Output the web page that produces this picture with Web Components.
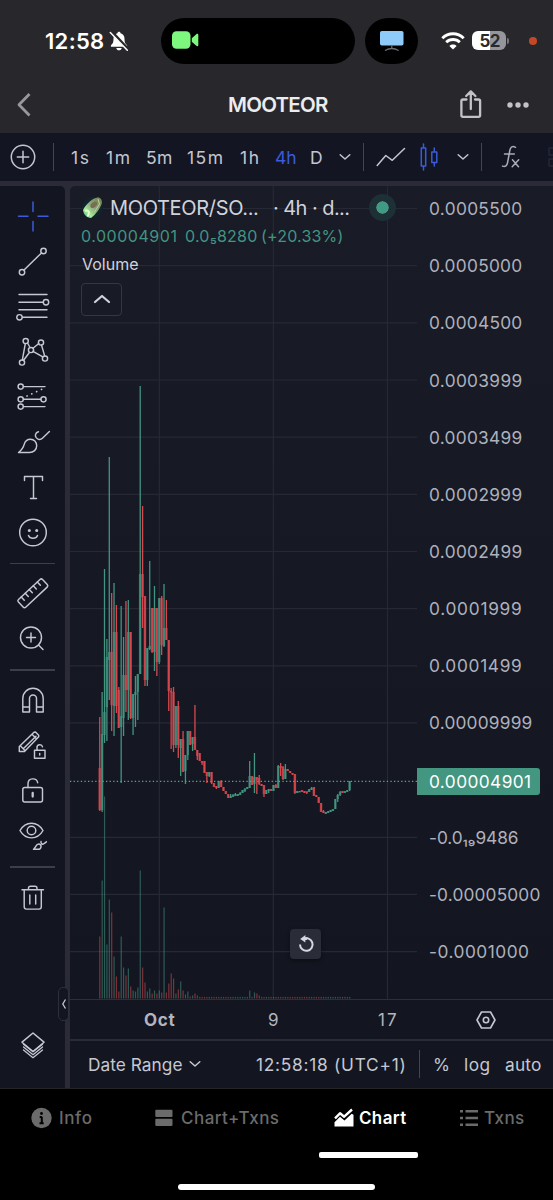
<!DOCTYPE html>
<html lang="en">
<head>
<meta charset="utf-8">
<title>MOOTEOR</title>
<style>
    body {
        margin: 0;
        width: 553px;
        height: 1200px;
        overflow: hidden;
        background: #000;
        font-family: Inter, "Liberation Sans", sans-serif;
    }
</style>
</head>
<body>
<mobile-app></mobile-app>

<script>
// every icon: [width, height, markup], stroke by default
const ICONS = {
    bell: [20, 20, `<path d="M10 .8c.9 0 1.500.6 1.500 1.400 2.600.7 4 2.800 4 5.500 0 4 1 5 2.300 6.300.8.900.4 1.800-.8 1.800H3c-1.200 0-1.600-.9-.8-1.800C3.500 12.700 4.500 11.700 4.500 7.700c0-2.700 1.400-4.800 4-5.500C8.500 1.400 9.100.8 10 .8zM7.300 17h5.400c-.3 1.600-1.300 2.300-2.700 2.300S7.600 18.600 7.300 17z" fill="currentColor" stroke="none"/><path d="M2.300.5l17.500 18.600" stroke="#28282c" stroke-width="3.200"/><path d="M1.300 1.500l17 17.800" stroke-width="1.500"/>`],
    camera: [27, 18, `<rect y=".3" width="18.500" height="17.400" rx="4.500" fill="#7df77d" stroke="none"/><path d="M19.800 7.200l4.500-4c1-.8 2-.4 2 .8v10c0 1.200-1 1.600-2 .8l-4.500-4z" fill="#7df77d" stroke="none"/>`],
    screen: [24, 20, `<rect width="23.500" height="14.500" rx="1.800" fill="#8fcbf8" stroke="none"/><path d="M11.800 15v2.500M5.500 19.300c2-1.300 4-1.800 6.300-1.800s4.300.5 6.300 1.800" stroke="#696b70" stroke-width="1.300"/>`],
    wifi: [24, 18, `<g stroke-width="2.900" stroke-linecap="butt"><path d="M1.300 6.300c6-6 15.400-6 21.400 0M5.200 10.300c3.800-3.700 9.800-3.700 13.600 0"/></g><path d="M12 17.500L8.400 13.900c2-1.800 5.200-1.800 7.200 0z" fill="currentColor" stroke="none"/>`],
    back: [16, 26, `<path d="M13.500 2L3 12.800l10.500 10.700" stroke-width="2.800" stroke-linecap="butt"/>`],
    share: [22, 29, `<g stroke-width="2.300"><path d="M6.500 9.500H3a1.600 1.600 0 0 0-1.600 1.600v14.200A1.600 1.600 0 0 0 3 26.900h15.500a1.600 1.600 0 0 0 1.600-1.600V11.100a1.600 1.600 0 0 0-1.600-1.600H15M10.800 19V2M6.200 6l4.600-4.600L15.400 6"/></g>`],
    dots: [22, 6, `<g fill="currentColor" stroke="none"><circle cx="3" cy="3" r="2.700"/><circle cx="11" cy="3" r="2.700"/><circle cx="19" cy="3" r="2.700"/></g>`],
    plus: [26, 26, `<circle cx="13" cy="13" r="11.700" stroke-width="1.500"/><path d="M13 7.300v11.400M7.300 13h11.400" stroke-width="1.500"/>`],
    down: [12, 8, `<path d="M1.200 1.800L6 6l4.800-4.200" stroke-width="1.500"/>`],
    line: [30, 20, `<path d="M1.200 18.500l8.600-10 6.500 4.800L28.500 1.500" stroke-width="1.500"/>`],
    candles: [20, 28, `<g stroke-width="1.500"><path d="M2.300 5h4.400v18H2.300zM4.500 1v4M4.500 23v4M12.800 9h5v10.500h-5zM15.300 5v4M15.300 19.500V23"/></g>`],
    fx: [20, 24, `<g stroke-width="1.500"><path d="M14.500 2.300C11.500.5 9.500 2 8.900 5L6.600 17.500c-.6 3-2.200 4.600-5.100 3.600M3.500 9h9.800M11.500 14.800l6 7M17.700 14.800l-6.500 7"/></g>`],
    grid: [8, 24, `<path d="M7 3H3v7h4M7 14H3v7h4" stroke="#23283a" stroke-width="1.500"/>`],
    up: [18, 12, `<path d="M2 9l7-6 7 6" stroke-width="2.200"/>`],
    reset: [20, 20, `<path d="M4 10.500a6.300 6.300 0 1 0 3.300-5.600H11" stroke-width="2" stroke-linecap="butt"/><path d="M4.200 5l5.200-4v7.500z" fill="currentColor" stroke="none"/>`],
    hex: [22, 20, `<path d="M6.500 2h9l4.500 8-4.500 8h-9L2 10z" stroke-width="1.600"/><circle cx="11" cy="10" r="2.700" stroke-width="1.600"/>`],
    layers: [26, 30, `<path d="M13 2l11 9.200-11 9.300L2 11.200z" stroke-width="1.500"/><path d="M3.500 16l9.500 7.700 9.500-7.700M3.500 19l9.500 7.700L22.500 19M3.500 13.200l9.500 7.500 9.500-7.500" stroke-width="1.300"/>`],
    info: [21, 22, `<circle cx="10.500" cy="11" r="10.200" fill="currentColor" stroke="none"/><path d="M10.800 9.800v6.200M8.700 10h2M8.500 16.300h4.200" stroke="#000" stroke-width="2" stroke-linecap="butt"/><circle cx="10.500" cy="6.500" r="1.400" fill="#000" stroke="none"/>`],
    split: [18, 18, `<g fill="currentColor" stroke="none"><rect x=".3" y=".8" width="17.200" height="7.300" rx="1"/><rect x=".3" y="9.800" width="17.200" height="7.300" rx="1"/></g>`],
    area: [20, 20, `<path d="M1 10.300l5-5 4.200 3.400L18 1.500" stroke-width="2.400" stroke-linecap="butt"/><path d="M.5 18.500v-4.300L6 8.800l4.500 3.700 7.200-6.800 1.800 1v11.800z" fill="currentColor" stroke="none"/>`],
    list: [20, 18, `<path d="M1 2.300h3M1 9h3M1 15.700h3M6.500 2.300H19M6.500 9H19M6.500 15.700H19" stroke-width="2.600" stroke-linecap="butt"/>`],

    // rail icons share one 66x45 cell
    cross: [66, 45, `<path d="M33 8v9.500M33 27.500V37M18.500 22.200H28M38 22.200h10" stroke="#3b5bdb" stroke-width="1.500"/>`],
    trend: [66, 45, `<path d="M24 31.100l17.500-17.200"/><circle cx="22" cy="33.200" r="2.700"/><circle cx="43.500" cy="12" r="2.700"/>`],
    fib: [66, 45, `<path d="M19 10.500h28M19 18.200h24M19 25.700h28M22.500 33.300H47"/><circle cx="46" cy="18.200" r="2.700"/><circle cx="19.500" cy="33.300" r="2.700"/>`],
    pattern: [66, 45, `<path d="M25.300 14.600l-2.900 16M27.500 14l2 3.500M33 19.300l5.800-4.800M41.500 16l3 10.400M33 22.300l9.800 5.500M23.800 31l5.600-7.500"/><circle cx="25.700" cy="12" r="2.600"/><circle cx="41" cy="13.500" r="2.600"/><circle cx="31" cy="21" r="2.600"/><circle cx="45" cy="29.500" r="2.600"/><circle cx="22" cy="33.500" r="2.600"/>`],
    forecast: [66, 45, `<path d="M23.500 12.600H45M23.500 25.300h17.300M23.500 32.600H45"/><path d="M27 22l16.500-7.500" stroke-dasharray=".1 5.200" stroke-width="1.700"/><circle cx="20.700" cy="12.600" r="2.600"/><circle cx="20.700" cy="25.300" r="2.600"/><circle cx="43.500" cy="25.300" r="2.600"/><circle cx="20.700" cy="32.600" r="2.600"/>`],
    brush: [66, 45, `<path d="M18.500 33.500h11c4 0 7.200-2.800 7.200-6.700s-2.800-6.600-6.200-6.600c-3.200 0-5.500 2-6.300 5.200-.7 2.700-2.700 5.900-5.700 8.100z"/><path d="M38.500 12.800c-3 .8-4 3.500-2.300 5.800 1.800 2.300 4.300 2.500 6.200.7l7-6.800"/>`],
    text: [66, 45, `<path d="M24.500 15.500v-4h18v4M33.500 11.500v22M30.500 33.500h6"/>`],
    smile: [66, 45, `<circle cx="33" cy="22.500" r="13.300"/><circle cx="29.300" cy="20.500" r="1.500" fill="currentColor" stroke="none"/><circle cx="36.700" cy="20.500" r="1.500" fill="currentColor" stroke="none"/><path d="M28.500 25.500c1.500 3.800 7.500 3.800 9 0"/>`],
    ruler: [66, 45, `<g transform="rotate(-43 33 22.500)"><rect x="16.500" y="17" width="33" height="10.500" rx="1.800"/><path d="M22 17v4.500M27.500 17v4.500M33 17v4.500M38.500 17v4.500M44 17v4.500"/></g>`],
    zoom: [66, 45, `<circle cx="31" cy="21.500" r="10.500"/><path d="M31 17v9M26.500 21.500h9M38.500 29l4.500 4.500"/>`],
    magnet: [66, 45, `<path d="M22.800 34V20.500a10.200 10.200 0 0 1 20.400 0V34h-6.700V20.500a3.500 3.500 0 0 0-7 0V34zM22.800 29h6.700M36.500 29h6.700"/>`],
    penlock: [66, 45, `<path d="M19.300 28.500v-5L34 9.300l1.500-.3 3.200 3.200v1.500L24.500 28.500zM32 11.200l4.700 4.700M20.500 23l4.700 4.700M23.500 25.500L36 13.300"/><path d="M34.500 27.300h10.500v8H34.500zM37 27.300v-2.800c0-3.300 4.800-3.700 5.500-.7M39.700 30.500v1.500"/>`],
    lock: [66, 45, `<rect x="22.800" y="19.500" width="19.700" height="14.500" rx="2"/><path d="M28 19.500v-3.800c0-6 8.500-6.500 9.700-1"/><path d="M32.700 25v3.500" stroke-width="2.300"/>`],
    eye: [66, 45, `<path d="M20 16.500c5.500-9.800 17.500-9.800 23 0-5.500 9.800-17.500 9.800-23 0z"/><circle cx="31.500" cy="16.500" r="4.300"/><path d="M33.500 35.300h4.700c3.300 0 4-4.800.8-5.300-3.200-.3-3 3.500-5.500 5.300zM41 27.500c-.5 2.500 2 3.500 3.400 1.800l2-1.500"/>`],
    trash: [66, 45, `<path d="M22 14.800h21.500M24.200 14.800v17a2.300 2.300 0 0 0 2.300 2.300h12.500a2.300 2.300 0 0 0 2.300-2.300v-17M28.500 14.500v-1.200c0-1.200.7-2 2-2h4.500c1.300 0 2 .8 2 2v1.200M29.800 20v9M35.700 20v9"/>`]
};

// one row per candle: colour, high, low, body top, body bottom
const CANDLES = `r717,811,768,810 g692,812,734,810 g569,743,712,735 g639,741,657,707 g457,700,652,660 r593,731,652,705
g583,736,632,706 r605,713,632,706 r687,728,690,728 g606,783,716,727 g637,736,675,718 r601,712,675,690
g600,720,632,690 r632,719,632,718 g694,735,694,718 g676,727,692,695 g674,720,674,692 g386,674,574,674
r506,628,574,597 r596,686,596,680 g648,686,648,680 g561,650,646,649 r608,653,608,652 g586,671,608,652
r608,676,608,662 g598,664,598,662 r596,655,598,645 g584,647,628,646 r600,640,628,640 r640,711,640,691
r688,749,691,692 r687,752,692,745 g706,748,706,745 r701,758,706,745 g739,776,739,748 r731,772,739,772
g755,784,755,771 g731,760,731,755 r731,745,731,745 g737,751,737,744 r705,750,737,750 r750,760,750,756
r753,761,753,761 r761,765,761,763 r761,773,761,773 r772,783,772,776 g772,777,772,776 r772,784,772,783
r783,787,783,787 r786,789,786,788 g781,788,781,788 r780,787,781,787 r787,791,787,791 r791,794,791,794
r794,798,794,798 g794,798,796,798 g794,797,795,797 g793,796,794,796 g794,796,794,796 g792,795,793,795
g790,793,790,793 g788,792,789,791 g787,789,787,789 g761,788,776,788 r776,785,776,785 g753,793,777,784
r777,794,777,780 r775,785,778,784 r784,786,784,786 r785,797,785,794 g790,794,790,794 g789,793,789,791
r789,791,789,791 g785,791,785,791 r784,788,785,788 g765,788,766,788 r763,776,766,768 r766,780,767,779
g764,779,769,779 r769,771,769,771 r771,773,771,773 r773,775,773,774 r774,794,774,793 g791,793,791,793
g791,792,791,792 r790,792,790,792 r791,793,791,793 r792,794,791,793 g789,792,789,792 g787,790,788,790
r787,796,787,796 r795,797,795,797 r797,803,797,803 r803,812,803,812 r810,813,811,813 g812,814,812,814
g811,813,811,813 g810,812,810,812 g809,811,809,811 g799,809,799,809 g794,802,795,799 g791,796,792,795
r791,793,791,793 g791,793,791,793 g790,792,790,792 g781,791,781,790`.split(/\s+/);

const VOLUMES = [62, 118, 202, 54, 99, 86, 42, 22, 7, 62, 31, 23, 30, 12, 8, 7, 11, 128, 31, 16, 7, 10, 5, 8, 5, 8, 6, 91, 6, 15, 25, 20, 5, 9, 17, 8, 4, 7, 2, 3, 5, 3];

class AppElement extends HTMLElement {
    constructor() {
        super();
        this.attachShadow({ mode: "open" });
    }
    connectedCallback() {
        this.render();
    }
}

class UiIcon extends AppElement {
    render() {
        const [w, h, markup] = ICONS[this.getAttribute("name")];
        this.shadowRoot.innerHTML = `
            <style>
                :host { display: block; flex: none; width: ${w}px; height: ${h}px; }
                svg { display: block; }
            </style>
            <svg width="${w}" height="${h}" viewBox="0 0 ${w} ${h}" fill="none" stroke="currentColor" stroke-width="1.450" stroke-linecap="round" stroke-linejoin="round">${markup}</svg>
        `;
    }
}
customElements.define("ui-icon", UiIcon);

// label whose tracking is adjusted so the text fills the given width
class UiLabel extends AppElement {
    render() {
        const width = Number(this.getAttribute("width"));
        this.shadowRoot.innerHTML = `
            <style>
                :host { display: flex; flex: none; width: ${width}px; font-size: ${this.getAttribute("size") || 18}px; }
                span { flex: none; white-space: pre; }
            </style>
            <span><slot></slot></span>
        `;
        const span = this.shadowRoot.querySelector("span");
        const natural = span.getBoundingClientRect().width;
        span.style.letterSpacing = (width + 1.5 - natural) / this.textContent.length + "px";
    }
}
customElements.define("ui-label", UiLabel);

class StatusBar extends AppElement {
    render() {
        this.shadowRoot.innerHTML = `
            <style>
                :host { display: flex; align-items: center; height: 46px; padding: 17.500px 0 11.500px 45px; color: #fff; }
                .time { font-weight: 600; }
                .bell { margin-left: 6px; }
                .island { display: flex; align-items: center; box-sizing: border-box; width: 194px; height: 46px; margin-left: 32px; padding-left: 11px; padding-bottom: 1px; border-radius: 23px; background: #000; }
                .cast { display: flex; align-items: center; justify-content: center; width: 53px; height: 46px; margin-left: 10px; border-radius: 23px; background: #000; }
                .wifi { margin-left: 23px; }
                .battery { display: flex; align-items: center; justify-content: center; width: 34px; height: 18.500px; margin-left: 7px; border-radius: 6px; background: linear-gradient(90deg, #fff 52%, #96969a 52%); color: #29292d; font-weight: 700; }
                .nub { width: 2px; height: 6px; margin-left: 1px; border-radius: 0 2px 2px 0; background: #77777b; }
                .dot { width: 8px; height: 8px; margin-left: 20px; border-radius: 50%; background: #c54826; }
            </style>
            <ui-label class="time" width="58" size="22">12:58</ui-label>
            <ui-icon class="bell" name="bell"></ui-icon>
            <div class="island"><ui-icon name="camera"></ui-icon></div>
            <div class="cast"><ui-icon name="screen"></ui-icon></div>
            <ui-icon class="wifi" name="wifi"></ui-icon>
            <div class="battery"><ui-label width="19" size="17">52</ui-label></div>
            <div class="nub"></div>
            <div class="dot"></div>
        `;
    }
}
customElements.define("status-bar", StatusBar);

class AppHeader extends AppElement {
    render() {
        this.shadowRoot.innerHTML = `
            <style>
                :host { display: flex; align-items: center; height: 55px; padding-bottom: 3px; }
                .back { margin-left: 16px; color: #98989b; }
                .title { margin-left: 196px; color: #ececef; font-weight: 600; }
                .share { margin-left: 134px; color: #c3c3c7; position: relative; top: 2px; }
                .dots { margin-left: 25px; color: #c3c3c7; position: relative; top: 2px; }
                .back, .title { position: relative; top: 2px; }
            </style>
            <ui-icon class="back" name="back"></ui-icon>
            <ui-label class="title" width="98" size="20.500">MOOTEOR</ui-label>
            <ui-icon class="share" name="share"></ui-icon>
            <ui-icon class="dots" name="dots"></ui-icon>
        `;
    }
}
customElements.define("app-header", AppHeader);

class ChartToolbar extends AppElement {
    render() {
        // [label, left gap, width]
        const intervals = [["1s", 17, 18], ["1m", 17, 24], ["5m", 16, 25], ["15m", 16, 36], ["1h", 17, 19], ["4h", 16, 20], ["D", 15, 12]];
        this.shadowRoot.innerHTML = `
            <style>
                :host { display: flex; align-items: center; box-sizing: border-box; height: 48px; padding-left: 10px; background: #131622; color: #c3c6d0; overflow: hidden; }
                .sep { flex: none; width: 1px; height: 28px; background: #43464f; }
                .active { color: #3b5bdb; }
            </style>
            <ui-icon name="plus"></ui-icon>
            <div class="sep" style="margin-left: 17px"></div>
            ${intervals.map(([text, gap, width]) => `<ui-label class="${text === "4h" ? "active" : ""}" style="margin-left: ${gap}px" width="${width}" size="17.500">${text}</ui-label>`).join("")}
            <ui-icon name="down" style="margin-left: 17px"></ui-icon>
            <div class="sep" style="margin-left: 12px"></div>
            <ui-icon name="line" style="margin-left: 12px"></ui-icon>
            <ui-icon class="active" name="candles" style="margin-left: 13px"></ui-icon>
            <ui-icon name="down" style="margin-left: 18px"></ui-icon>
            <div class="sep" style="margin-left: 12px"></div>
            <ui-icon name="fx" style="margin-left: 19px; color: #a9acb7"></ui-icon>
            <ui-icon name="grid" style="margin-left: 25px"></ui-icon>
        `;
    }
}
customElements.define("chart-toolbar", ChartToolbar);

class ToolRail extends AppElement {
    render() {
        const tools = ["cross", "trend", "fib", "pattern", "forecast", "brush", "text", "smile", "", "ruler", "zoom", "", "magnet", "penlock", "lock", "eye", "", "trash"];
        this.shadowRoot.innerHTML = `
            <style>
                :host { display: flex; flex-direction: column; flex: none; position: relative; box-sizing: border-box; width: 65px; height: 902px; padding-top: 7.500px; border-radius: 0 5px 0 0; background: #131620; color: #c5c8d2; }
                .tool { height: 45.200px; }
                hr { flex: none; width: 45px; height: 1.500px; margin: 7.500px 0 7.300px 10px; border: 0; background: #3c3f49; }
                .layers { margin: auto 0 27px 20px; }
                .handle { position: absolute; left: 58px; top: 801px; display: flex; align-items: center; justify-content: center; box-sizing: border-box; width: 11px; height: 34px; border: 1px solid #2d303b; border-radius: 5px; background: #131620; }
            </style>
            ${tools.map(name => name ? `<div class="tool"><ui-icon name="${name}"></ui-icon></div>` : "<hr>").join("")}
            <ui-icon class="layers" name="layers"></ui-icon>
            <div class="handle"><svg width="6" height="12" fill="none" stroke="currentColor" stroke-width="1.300"><path d="M4.500 1.500L1.800 6l2.700 4.500"/></svg></div>
        `;
    }
}
customElements.define("tool-rail", ToolRail);

class PriceChart extends AppElement {
    grid() {
        let out = "";
        for (let i = 0; i < 14; i++) {
            if (i !== 10) out += `M70 ${(208.5 + i * 57.16).toFixed(1)}H417`;
        }
        return out + "M159.300 186V999M273.300 186V999M387.500 186V999";
    }

    candles() {
        return CANDLES.map((row, i) => {
            const color = row[0] === "g" ? "#439481" : "#d9484f";
            const [high, low, top, bottom] = row.slice(1).split(",").map(Number);
            const x = 99.7 + i * 2.38;
            return `<rect x="${(x - 1.25).toFixed(2)}" y="${top}" width="2.500" height="${Math.max(bottom - top, 1.5)}" fill="${color}" opacity=".72"/>
                <rect x="${(x - 0.6).toFixed(2)}" y="${high}" width="1.300" height="${low - high}" fill="${color}"/>`;
        }).join("");
    }

    volumes() {
        return CANDLES.map((row, i) => {
            const late = { 63: 8, 65: 6, 66: 5, 67: 3 };
            const height = VOLUMES[i] || late[i] || 1.6;
            return `<rect x="${(99.2 + i * 2.38).toFixed(2)}" y="${998.5 - height}" width="1.200" height="${height}" fill="${row[0] === "g" ? "#439481" : "#d9484f"}" opacity=".55"/>`;
        }).join("");
    }

    render() {
        this.shadowRoot.innerHTML = `
            <style>
                :host { display: block; width: 347px; height: 814px; }
                svg { display: block; }
            </style>
            <svg width="347" height="814" viewBox="70 186 347 814">
                <path d="${this.grid()}" stroke="#262935" stroke-width="1.200"/>
                ${this.volumes()}
                ${this.candles()}
                <path d="M70 781.300H417" stroke="#5ba593" stroke-width="1.200" stroke-dasharray="1.300 2.300"/>
            </svg>
        `;
    }
}
customElements.define("price-chart", PriceChart);

class ChartLegend extends AppElement {
    render() {
        this.shadowRoot.innerHTML = `
            <style>
                :host { position: absolute; left: 11px; top: 7px; display: flex; flex-direction: column; color: #d0d3dc; }
                .row { display: flex; align-items: center; }
                .symbol { height: 29px; }
                .values { height: 27px; color: #439481; }
                .volume { height: 30px; padding-left: 1px; }
                .status { width: 13px; height: 13px; margin-left: 21px; border: 7.500px solid #1c3035; border-radius: 50%; background: #439a84; background-clip: padding-box; }
                button { display: flex; align-items: center; justify-content: center; box-sizing: border-box; width: 41px; height: 33px; margin: 3.500px 0 0; padding: 0; border: 1.500px solid #343741; border-radius: 4px; background: none; color: #d0d3dc; }
            </style>
            <div class="row symbol">
                <svg width="22" height="23" viewBox="0 0 22 23">
                    <defs>
                        <linearGradient id="rock" x1="1" y1="0" x2="0" y2="1"><stop offset="0" stop-color="#6d7d4d"/><stop offset=".45" stop-color="#8da57b"/><stop offset=".75" stop-color="#a6ed9c"/><stop offset="1" stop-color="#37a06d"/></linearGradient>
                    </defs>
                    <circle cx="11.500" cy="11.500" r="10.500" fill="#10242b"/>
                    <path d="M2 14C5 8 12 1.500 17.500 1.200c2.500.8 4 3.300 3.300 6.300-1.500 4.500-6 11-10.800 14.500-4.500-.5-7.500-3.500-8-8z" fill="url(#rock)"/>
                    <path d="M10 8c2-2.500 5-3.500 6-1.500S14.500 11.500 12 12s-3.500-2 -2-4z" fill="#776f52"/>
                    <path d="M4 15c1.500-1 3.500-.5 4 1s-1 3.300-1.500 4.500" fill="none" stroke="#e6ffd2" stroke-width="1.800"/>
                    <path d="M17 3l1.500 5-5 8" fill="none" stroke="#c3cf9c" stroke-width="1"/>
                </svg>
                <ui-label width="147" size="20" style="margin-left: 7px">MOOTEOR/SO...</ui-label>
                <ui-label width="75" size="20" style="margin-left: 16px">· 4h · d...</ui-label>
                <div class="status"></div>
            </div>
            <div class="row values">
                <ui-label width="95" size="16">0.00004901</ui-label>
                <ui-label width="71" size="16" style="margin-left: 9px">0.0₅8280</ui-label>
                <ui-label width="81" size="16" style="margin-left: 5px">(+20.33%)</ui-label>
            </div>
            <div class="row volume"><ui-label width="55" size="16">Volume</ui-label></div>
            <button><ui-icon name="up"></ui-icon></button>
        `;
    }
}
customElements.define("chart-legend", ChartLegend);

class PriceAxis extends AppElement {
    render() {
        const prices = [
            ["0.0005500", 92], ["0.0005000", 92], ["0.0004500", 92], ["0.0003999", 92], ["0.0003499", 92], ["0.0002999", 92], ["0.0002499", 92],
            ["0.0001999", 92], ["0.0001499", 92], ["0.00009999", 102], ["0.00004901", 101], ["-0.0₁₉9486", 88], ["-0.00005000", 110], ["-0.0001000", 99]
        ];
        this.shadowRoot.innerHTML = `
            <style>
                :host { display: block; width: 136px; height: 814px; margin-top: -6px; color: #aeb1bc; }
                .row { display: flex; align-items: center; height: 57.160px; padding-left: 12px; }
                .current { height: 27px; width: 111px; margin: 16.500px 0 13.660px; border-radius: 0 3px 3px 0; background: #43967f; color: #fff; }
            </style>
            ${prices.map(([text, width], i) => `<div class="row ${i === 10 ? "current" : ""}"><ui-label width="${width}" size="17.300">${text}</ui-label></div>`).join("")}
        `;
    }
}
customElements.define("price-axis", PriceAxis);

class ChartPanel extends AppElement {
    render() {
        this.shadowRoot.innerHTML = `
            <style>
                :host { display: block; position: relative; flex: 1; height: 902px; border-radius: 5px 0 0 0; background: linear-gradient(#191b27, #131620 90%); overflow: hidden; }
                .plot { display: flex; height: 813px; border-bottom: 1px solid #2c2f3a; }
                .times { display: flex; align-items: center; height: 39px; border-bottom: 2px solid #292c37; color: #b2b5bf; }
                .footer { display: flex; align-items: center; height: 46px; padding: 0 0 0 18px; color: #c5c8d2; }
                .sep { width: 1px; height: 28px; margin-left: 14px; background: #43464f; }
                .reset { position: absolute; left: 220px; top: 743px; display: flex; align-items: center; justify-content: center; width: 31px; height: 30px; border-radius: 4px; background: #2a2c38; box-shadow: 0 2px 4px #0006; color: #d6d8e0; }
            </style>
            <div class="plot"><price-chart></price-chart><price-axis></price-axis></div>
            <div class="times">
                <ui-label width="30" size="17" style="margin-left: 74px; font-weight: 700">Oct</ui-label>
                <ui-label width="10" size="17" style="margin-left: 94px">9</ui-label>
                <ui-label width="19" size="17" style="margin-left: 100px">17</ui-label>
                <ui-icon name="hex" style="margin-left: 78px; color: #c5c8d2"></ui-icon>
            </div>
            <div class="footer">
                <ui-label width="93" size="17.300">Date Range</ui-label>
                <ui-icon name="down" style="margin-left: 8px"></ui-icon>
                <ui-label width="149" size="17.300" style="margin-left: 55px">12:58:18 (UTC+1)</ui-label>
                <div class="sep"></div>
                <ui-label width="16" size="17.300" style="margin-left: 13px">%</ui-label>
                <ui-label width="25" size="17.300" style="margin-left: 15px">log</ui-label>
                <ui-label width="35" size="17.300" style="margin-left: 16px">auto</ui-label>
            </div>
            <chart-legend></chart-legend>
            <div class="reset"><ui-icon name="reset"></ui-icon></div>
        `;
    }
}
customElements.define("chart-panel", ChartPanel);

class TabBar extends AppElement {
    render() {
        this.shadowRoot.innerHTML = `
            <style>
                :host { display: flex; flex-direction: column; box-sizing: border-box; height: 112px; border-top: 1px solid #242426; background: #000; color: #6b6b6b; }
                .tabs { display: flex; align-items: center; height: 58px; padding-left: 31px; font-weight: 500; }
                .active { color: #fff; font-weight: 600; }
                .underline { width: 99px; height: 5.500px; margin: 5px 0 0 319px; border-radius: 2px; background: #fff; }
                .home { width: 197px; height: 6.500px; margin: 26px 0 0 178px; border-radius: 4px; background: #fff; }
            </style>
            <div class="tabs">
                <ui-icon name="info"></ui-icon>
                <ui-label width="32" size="17" style="margin-left: 7px">Info</ui-label>
                <ui-icon name="split" style="margin-left: 64px"></ui-icon>
                <ui-label width="97" size="17" style="margin-left: 8px">Chart+Txns</ui-label>
                <ui-icon class="active" name="area" style="margin-left: 56px"></ui-icon>
                <ui-label class="active" width="46" size="17" style="margin-left: 5px">Chart</ui-label>
                <ui-icon name="list" style="margin-left: 54px"></ui-icon>
                <ui-label width="39" size="17" style="margin-left: 5px">Txns</ui-label>
            </div>
            <div class="underline"></div>
            <div class="home"></div>
        `;
    }
}
customElements.define("tab-bar", TabBar);

class MobileApp extends AppElement {
    render() {
        this.shadowRoot.innerHTML = `
            <style>
                :host { display: flex; flex-direction: column; width: 553px; height: 1200px; background: #28282c; }
                .main { display: flex; gap: 5px; height: 902px; padding-top: 5px; background: #2a2b37; }
            </style>
            <status-bar></status-bar>
            <app-header></app-header>
            <chart-toolbar></chart-toolbar>
            <div class="main"><tool-rail></tool-rail><chart-panel></chart-panel></div>
            <tab-bar></tab-bar>
        `;
    }
}
customElements.define("mobile-app", MobileApp);
</script>
</body>
</html>
